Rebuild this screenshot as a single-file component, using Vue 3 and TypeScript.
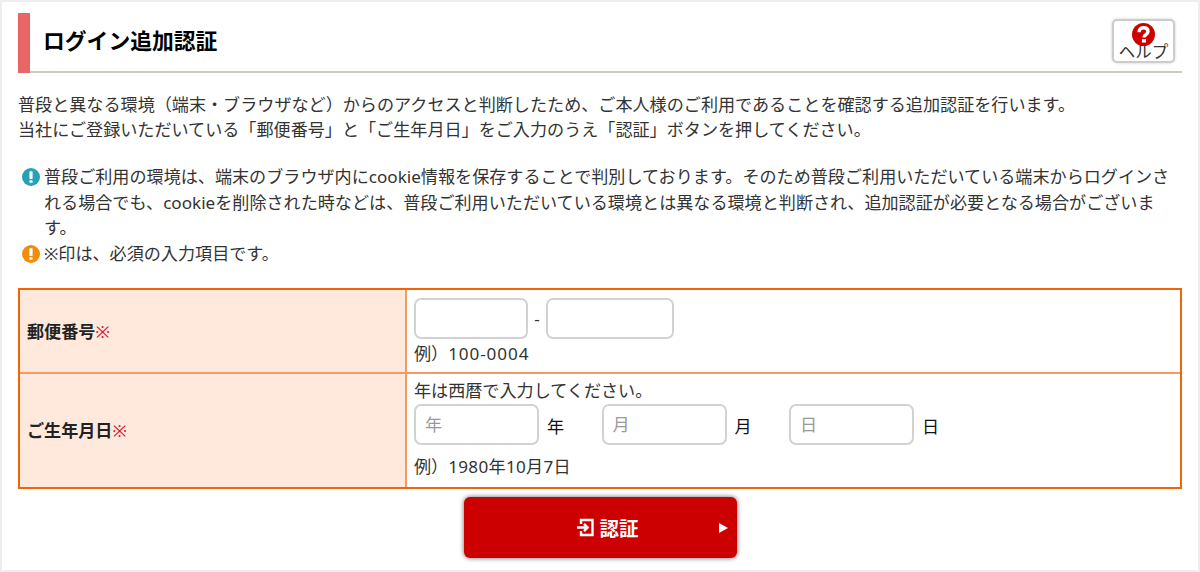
<template>
  <div class="page">
    <header class="page-header">
      <h1 class="page-title">ログイン追加認証</h1>
      <button class="help-button" type="button">
        <svg class="help-icon" viewBox="0 0 24 24" aria-hidden="true">
          <circle cx="12" cy="12" r="12" fill="#cc0000" />
          <path
            d="M7.400 9.600C7.400 6.200 9.400 5 12 5s4.700 1.300 4.700 3.800c0 3-4.200 3-4.200 6.400"
            fill="none"
            stroke="#fff"
            stroke-width="3.600"
          />
          <rect x="10.400" y="16.800" width="4.200" height="3.600" fill="#fff" />
        </svg>
        <span class="help-label">ヘルプ</span>
      </button>
    </header>

    <p class="lead">
      普段と異なる環境（端末・ブラウザなど）からのアクセスと判断したため、ご本人様のご利用であることを確認する追加認証を行います。<br />
      当社にご登録いただいている「郵便番号」と「ご生年月日」をご入力のうえ「認証」ボタンを押してください。
    </p>

    <ul class="notes">
      <li v-for="note in notes" :key="note.type" class="note" :class="note.type">
        <svg class="note-icon" viewBox="0 0 18 18" aria-hidden="true">
          <circle cx="9" cy="9" r="9" fill="currentColor" />
          <rect x="7.400" y="3.200" width="3.200" height="7.800" rx="0.600" fill="#fff" />
          <rect x="7.400" y="12.200" width="3.200" height="2.600" rx="0.600" fill="#fff" />
        </svg>
        <p class="note-text">
          <span v-for="line in note.lines" :key="line" class="note-line">{{ line }}</span>
        </p>
      </li>
    </ul>

    <form @submit.prevent>
      <div class="form-table">
        <div class="form-row zip">
          <div class="form-label">郵便番号<span class="required">※</span></div>
          <div class="form-body">
            <div class="fields">
              <input v-model="zipFirst" class="field zip-first" type="text" aria-label="郵便番号" />
              <span class="hyphen">-</span>
              <input v-model="zipLast" class="field zip-last" type="text" aria-label="郵便番号" />
            </div>
            <p class="example">例）<span class="number">100-0004</span></p>
          </div>
        </div>
        <div class="form-row birth">
          <div class="form-label">ご生年月日<span class="required">※</span></div>
          <div class="form-body">
            <p class="guide">年は西暦で入力してください。</p>
            <div class="fields">
              <label v-for="part in birthParts" :key="part.unit" class="birth-part">
                <input v-model="part.value" class="field" type="text" :placeholder="part.unit" />
                <span class="unit">{{ part.unit }}</span>
              </label>
            </div>
            <p class="example">例）<span class="date">1980年10月7日</span></p>
          </div>
        </div>
      </div>

      <button class="submit-button" type="submit">
        <svg class="submit-icon" viewBox="0 0 17 19" aria-hidden="true">
          <path
            d="M4 6V2h11.500v15H4v-4M0 9.500h10.500M7 5.800l3.700 3.700L7 13.200"
            fill="none"
            stroke="currentColor"
            stroke-width="2.400"
          />
        </svg>
        <span>認証</span>
        <svg class="submit-arrow" viewBox="0 0 9 10" aria-hidden="true">
          <path d="M0 0l9 5-9 5z" fill="currentColor" />
        </svg>
      </button>
    </form>
  </div>
</template>

<script setup lang="ts">
import { reactive, ref } from 'vue'

interface Note {
  type: 'info' | 'warning'
  lines: string[]
}

interface BirthPart {
  unit: string
  value: string
}

const notes: Note[] = [
  {
    type: 'info',
    lines: [
      '普段ご利用の環境は、端末のブラウザ内にcookie情報を保存することで判別しております。そのため普段ご利用いただいている端末からログインさ',
      'れる場合でも、cookieを削除された時などは、普段ご利用いただいている環境とは異なる環境と判断され、追加認証が必要となる場合がございま',
      'す。'
    ]
  },
  {
    type: 'warning',
    lines: ['※印は、必須の入力項目です。']
  }
]

const zipFirst = ref('')
const zipLast = ref('')

const birthParts = reactive<BirthPart[]>([
  { unit: '年', value: '' },
  { unit: '月', value: '' },
  { unit: '日', value: '' }
])
</script>

<style>
body {
  margin: 0;
}
</style>

<style scoped>
.page {
  box-sizing: border-box;
  width: 1200px;
  height: 572px;
  padding: 11px 16px 0;
  overflow: hidden;
  border: 2px solid #eee;
  background: #fff;
  color: #333;
  font-family: 'Noto Sans', 'Noto Sans CJK JP', sans-serif;
  font-size: 17.1px;
  line-height: 25px;
}

p,
ul {
  margin: 0;
  padding: 0;
  list-style: none;
}

button,
input {
  font-family: inherit;
}

.page-header {
  box-sizing: border-box;
  display: flex;
  align-items: flex-start;
  justify-content: space-between;
  height: 60px;
  padding: 6px 7px 0 13px;
  border-left: 12px solid #e96666;
  background: linear-gradient(#ccccbd, #ccccbd) left bottom / 100% 2px no-repeat;
}

.page-title {
  margin: 6px 0 0;
  color: #000;
  font-size: 21.8px;
  line-height: 32px;
}

.help-button {
  box-sizing: border-box;
  display: flex;
  flex-direction: column;
  align-items: center;
  width: 63px;
  height: 44px;
  padding: 2px 0 0;
  border: 2px solid #ccc;
  border-radius: 5px;
  background: #fff;
  box-shadow: 0 0 3px rgba(0, 0, 0, 0.2);
  color: #333;
}

.help-icon {
  flex: none;
  width: 23px;
  height: 23px;
}

.help-label {
  margin-top: -4px;
  font-size: 16.5px;
  line-height: 20px;
}

.lead {
  margin-top: 19px;
  white-space: nowrap;
}

.notes {
  margin-top: 22px;
}

.note {
  display: flex;
  gap: 4px;
  padding-left: 4px;
  line-height: 25.5px;
}

.note-icon {
  flex: none;
  width: 18px;
  height: 18px;
  margin-top: 4px;
}

.note-line {
  display: block;
  white-space: nowrap;
}

.info {
  color: #24a3b8;
}

.warning {
  color: #f28c0c;
}

.note-text {
  color: #333;
}

.form-table {
  box-sizing: border-box;
  height: 201px;
  margin-top: 22px;
  border: 2px solid #f26408;
}

.form-row {
  display: grid;
  grid-template-columns: 387px 1fr;
}

.zip {
  height: 82px;
  border-bottom: 2px solid #f49a62;
}

.birth {
  height: 113px;
}

.form-label {
  box-sizing: border-box;
  display: flex;
  align-items: center;
  padding-left: 7px;
  border-right: 2px solid #f49a62;
  background: #ffe9dc;
  color: #222;
  font-weight: bold;
}

.required {
  color: #d9142c;
  font-weight: normal;
}

.form-body {
  padding-left: 7px;
}

.fields {
  display: flex;
  align-items: center;
}

.field {
  box-sizing: border-box;
  width: 125px;
  height: 41px;
  padding: 0 9px;
  border: 2px solid #d2d2d2;
  border-radius: 7px;
  background: #fff;
  color: #333;
  font-size: 17.1px;
}

.field::placeholder {
  color: #999;
}

.zip .fields {
  padding-top: 8px;
}

.zip-first {
  width: 114px;
}

.zip-last {
  width: 128px;
}

.hyphen {
  width: 18px;
  text-align: center;
}

.zip .example {
  margin-top: 2px;
}

.number {
  letter-spacing: 0.9px;
}

.date {
  letter-spacing: 0.3px;
}

.guide {
  height: 26px;
  padding-top: 4px;
  line-height: 26px;
}

.birth-part {
  display: flex;
  align-items: center;
  width: 187.5px;
}

.unit {
  margin-top: 3px;
  margin-left: 8px;
  color: #111;
}

.birth .example {
  margin-top: 9px;
}

.submit-button {
  display: flex;
  align-items: center;
  justify-content: center;
  width: 273px;
  height: 61px;
  margin: 8px 0 0 445.5px;
  padding: 0 9px 0 113px;
  border: 0;
  border-radius: 6px;
  background: #c00;
  box-shadow: 0 0 5px rgba(0, 0, 0, 0.6);
  color: #fff;
  font-size: 19.500px;
  font-weight: bold;
}

.submit-icon {
  width: 17px;
  height: 19px;
  margin-right: 6px;
}

.submit-arrow {
  width: 9px;
  height: 10px;
  margin-left: auto;
}
</style>
